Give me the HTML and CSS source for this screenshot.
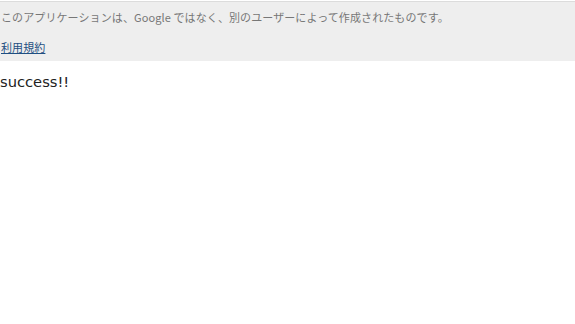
FILE: index.html
```html
<!DOCTYPE html>
<html lang="ja">
<head>
<meta charset="utf-8">
<title>success</title>
<link rel="stylesheet" href="styles.css">
</head>
<body>
<div class="warning">
  <div class="warning-text">このアプリケーションは、Google ではなく、別のユーザーによって作成されたものです。</div>
  <div class="warning-link"><a href="#">利用規約</a></div>
</div>
<div class="content">success!!</div>
</body>
</html>
```
FILE: styles.css
```css
html, body {
  margin: 0;
  padding: 0;
  background: #ffffff;
}
.warning {
  margin-top: 1px;
  border-top: 1px solid #dcdcdc;
  background: #eeeeee;
  padding: 7px 0 6px 1px;
  font-family: "Noto Sans CJK JP", "Liberation Sans", sans-serif;
  font-size: 11px;
  line-height: 16px;
  letter-spacing: 0.1px;
  color: #777777;
}
.warning-link {
  margin-top: 14px;
}
.warning-link a {
  color: #1f4f82;
  text-decoration: underline;
}
.content {
  margin-top: 11px;
  font-family: "DejaVu Sans", "Noto Sans CJK JP", sans-serif;
  font-size: 14.7px;
  line-height: 20px;
  color: #222222;
}
```
